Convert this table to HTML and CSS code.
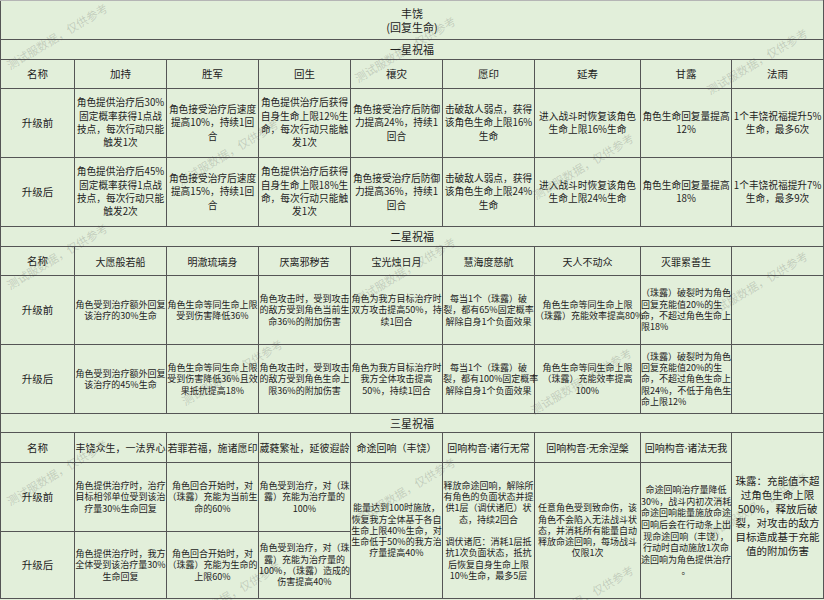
FILE: index.html
```html
<!DOCTYPE html>
<html lang="zh-CN">
<head>
<meta charset="utf-8">
<title>丰饶</title>
<link rel="stylesheet" href="styles.css">
</head>
<body>
<div class="page">
<table class="grid">
<colgroup>
<col class="w74"><col class="w92"><col class="w92"><col class="w92"><col class="w92"><col class="w92"><col class="w106"><col class="w91"><col class="w92">
</colgroup>
<tr class="r-title"><td colspan="9" class="t top">丰饶<br>(回复生命)</td></tr>

<tr class="r-sec"><td colspan="9" class="t">一星祝福</td></tr>
<tr class="r-h1">
<td class="h1">名称</td><td class="h1">加持</td><td class="h1">胜军</td><td class="h1">回生</td><td class="h1">禳灾</td><td class="h1">愿印</td><td class="h1">延寿</td><td class="h1">甘露</td><td class="h1">法雨</td>
</tr>
<tr class="r-b">
<td class="lab">升级前</td>
<td class="b1">角色提供治疗后30%<br>固定概率获得1点战<br>技点，每次行动只能<br>触发1次</td>
<td class="b1">角色接受治疗后速度<br>提高10%，持续1回<br>合</td>
<td class="b1">角色提供治疗后获得<br>自身生命上限12%生<br>命，每次行动只能触<br>发1次</td>
<td class="b1">角色接受治疗后防御<br>力提高24%，持续1<br>回合</td>
<td class="b1">击破敌人弱点，获得<br>该角色生命上限16%<br>生命</td>
<td class="b1">进入战斗时恢复该角色<br>生命上限16%生命</td>
<td class="b1">角色生命回复量提高<br>12%</td>
<td class="b1">1个丰饶祝福提升5%<br>生命，最多6次</td>
</tr>
<tr class="r-b">
<td class="lab">升级后</td>
<td class="b1">角色提供治疗后45%<br>固定概率获得1点战<br>技点，每次行动只能<br>触发2次</td>
<td class="b1">角色接受治疗后速度<br>提高15%，持续1回<br>合</td>
<td class="b1">角色提供治疗后获得<br>自身生命上限18%生<br>命，每次行动只能触<br>发1次</td>
<td class="b1">角色接受治疗后防御<br>力提高36%，持续1<br>回合</td>
<td class="b1">击破敌人弱点，获得<br>该角色生命上限24%<br>生命</td>
<td class="b1">进入战斗时恢复该角色<br>生命上限24%生命</td>
<td class="b1">角色生命回复量提高<br>18%</td>
<td class="b1">1个丰饶祝福提升7%<br>生命，最多9次</td>
</tr>

<tr class="r-sec"><td colspan="9" class="t">二星祝福</td></tr>
<tr class="r-h1">
<td class="lab">名称</td><td class="h2">大愿般若船</td><td class="h2">明澈琉璃身</td><td class="h2">厌离邪秽苦</td><td class="h2">宝光烛日月</td><td class="h2">慧海度慈航</td><td class="h2">天人不动众</td><td class="h2">灭罪累善生</td><td></td>
</tr>
<tr class="r-b">
<td class="lab">升级前</td>
<td class="b2">角色受到治疗额外回复<br>该治疗的30%生命</td>
<td class="b2">角色生命等同生命上限<br>受到伤害降低36%</td>
<td class="b2">角色攻击时，受到攻击<br>的敌方受到角色当前生<br>命36%的附加伤害</td>
<td class="b2">角色为我方目标治疗时<br>双方攻击提高50%，持<br>续1回合</td>
<td class="b2">每当1个（珠露）破<br>裂，都有65%固定概率<br>解除自身1个负面效果</td>
<td class="b2">角色生命等同生命上限<br>（珠露）充能效率提高80%</td>
<td class="b2 left">（珠露）破裂时为角色<br>回复充能值20%的生<br>命，不超过角色生命上<br>限18%</td>
<td></td>
</tr>
<tr class="r-b">
<td class="lab">升级后</td>
<td class="b2">角色受到治疗额外回复<br>该治疗的45%生命</td>
<td class="b2">角色生命等同生命上限<br>受到伤害降低36%且效<br>果抵抗提高18%</td>
<td class="b2">角色攻击时，受到攻击<br>的敌方受到角色生命上<br>限36%的附加伤害</td>
<td class="b2">角色为我方目标治疗时<br>我方全体攻击提高<br>50%，持续1回合</td>
<td class="b2">每当1个（珠露）破<br>裂，都有100%固定概率<br>解除自身1个负面效果</td>
<td class="b2">角色生命等同生命上限<br>（珠露）充能效率提高<br>100%</td>
<td class="b2 left">（珠露）破裂时为角色<br>回复充能值20%的生<br>命，不超过角色生命上<br>限24%，不低于角色生<br>命上限12%</td>
<td></td>
</tr>

<tr class="r-sec3"><td colspan="9" class="t">三星祝福</td></tr>
<tr class="r-h3">
<td class="lab">名称</td>
<td class="h2">丰饶众生，一法界心</td>
<td class="h2">若罪若福，施诸愿印</td>
<td class="h2">葳蕤繁祉，延彼遐龄</td>
<td class="h2">命途回响（丰饶）</td>
<td class="h2">回响构音<span class="dot">·</span>诸行无常</td>
<td class="h2">回响构音<span class="dot">·</span>无余涅槃</td>
<td class="h2">回响构音<span class="dot">·</span>诸法无我</td>
<td rowspan="3" class="zl">珠露：充能值不超<br>过角色生命上限<br>500%，释放后破<br>裂，对攻击的敌方<br>目标造成基于充能<br>值的附加伤害</td>
</tr>
<tr class="r-b">
<td class="lab">升级前</td>
<td class="b2">角色提供治疗时，治疗<br>目标相邻单位受到该治<br>疗量30%生命回复</td>
<td class="b2">角色回合开始时，对<br>（珠露）充能为当前生<br>命的60%</td>
<td class="b2">角色受到治疗，对（珠<br>露）充能为治疗量的<br>100%</td>
<td rowspan="2" class="b2">能量达到100时施放，<br>恢复我方全体基于各自<br>生命上限40%生命，对<br>生命低于50%的我方治<br>疗量提高40%</td>
<td rowspan="2" class="b2">释放命途回响，解除所<br>有角色的负面状态并提<br>供1层（调伏诸厄）状<br>态，持续2回合<br><br>调伏诸厄：消耗1层抵<br>抗1次负面状态，抵抗<br>后恢复自身生命上限<br>10%生命，最多5层</td>
<td rowspan="2" class="b2">任意角色受到致命伤，该<br>角色不会陷入无法战斗状<br>态，并消耗所有能量自动<br>释放命途回响，每场战斗<br>仅限1次</td>
<td rowspan="2" class="b2 tall">命途回响治疗量降低<br>30%，战斗内初次消耗<br>命途回响能量施放命途<br>回响后会在行动条上出<br>现命途回响（丰饶），<br>行动时自动施放1次命<br>途回响为角色提供治疗<br>。</td>
</tr>
<tr class="r-last">
<td class="lab">升级后</td>
<td class="b2">角色提供治疗时，我方<br>全体受到该治疗量30%<br>生命回复</td>
<td class="b2">角色回合开始时，对<br>（珠露）充能为生命的<br>上限60%</td>
<td class="b2">角色受到治疗，对（珠<br>露）充能为治疗量的<br>100%，（珠露）造成的<br>伤害提高40%</td>
</tr>
</table>

<div class="wm-layer" aria-hidden="true">
<span class="wm" style="left:57px;top:36px">测试服数据，仅供参考</span>
<span class="wm" style="left:405px;top:49px">测试服数据，仅供参考</span>
<span class="wm" style="left:757px;top:61px">测试服数据，仅供参考</span>
<span class="wm" style="left:228px;top:152px">测试服数据，仅供参考</span>
<span class="wm" style="left:583px;top:166px">测试服数据，仅供参考</span>
<span class="wm" style="left:57px;top:256px">测试服数据，仅供参考</span>
<span class="wm" style="left:405px;top:270px">测试服数据，仅供参考</span>
<span class="wm" style="left:757px;top:284px">测试服数据，仅供参考</span>
<span class="wm" style="left:232px;top:372px">测试服数据，仅供参考</span>
<span class="wm" style="left:581px;top:381px">测试服数据，仅供参考</span>
<span class="wm" style="left:57px;top:472px">测试服数据，仅供参考</span>
<span class="wm" style="left:405px;top:490px">测试服数据，仅供参考</span>
<span class="wm" style="left:757px;top:505px">测试服数据，仅供参考</span>
<span class="wm" style="left:230px;top:594px">测试服数据，仅供参考</span>
<span class="wm" style="left:583px;top:598px">测试服数据，仅供参考</span>
</div>
</div>
</body>
</html>
```

FILE: styles.css
```css
* { box-sizing: border-box; }

html, body {
  margin: 0;
  padding: 0;
  background: #e2efda;
}

body {
  font-family: "Noto Sans CJK SC", "Noto Sans", sans-serif;
  color: #222;
}

.page {
  position: relative;
  width: 824px;
  height: 600px;
  overflow: hidden;
  background: #e2efda;
}

.grid {
  border-collapse: collapse;
  table-layout: fixed;
  width: 823px;
  background: #e2efda;
}

.w74 { width: 74px; }
.w92 { width: 92px; }
.w91 { width: 91px; }
.w106 { width: 106px; }

.grid td {
  border: 1px solid #555;
  padding: 0;
  text-align: center;
  vertical-align: middle;
  white-space: nowrap;
  overflow: visible;
}

.grid td.top { border-top-color: #b5b5b5; }

.r-title { height: 39px; }
.r-sec { height: 20px; }
.r-sec3 { height: 19px; }
.r-h1 { height: 29px; }
.r-h3 { height: 30px; }
.r-b { height: 69px; }
.r-last { height: 67px; }

.t {
  font-size: 11px;
  line-height: 14.5px;
}

.h1 {
  font-size: 10.5px;
  line-height: 14px;
}

.h2 {
  font-size: 10px;
  line-height: 13px;
}

.dot {
  font-family: "Noto Sans", "DejaVu Sans", sans-serif;
}

.lab {
  font-size: 10.5px;
  line-height: 14px;
}

.b1 {
  font-size: 9.7px;
  line-height: 13.3px;
}

.b2 {
  font-size: 9px;
  line-height: 11.3px;
}

.b2.tall { line-height: 11.6px; }

.grid td.left { text-align: left; }

.zl {
  font-size: 10.5px;
  line-height: 14px;
}

.wm-layer {
  position: absolute;
  inset: 0;
  pointer-events: none;
}

.wm {
  position: absolute;
  font-size: 11.5px;
  line-height: 14px;
  color: rgba(60, 60, 60, 0.2);
  white-space: nowrap;
  transform: translate(-50%, -50%) rotate(-31deg);
}
```
